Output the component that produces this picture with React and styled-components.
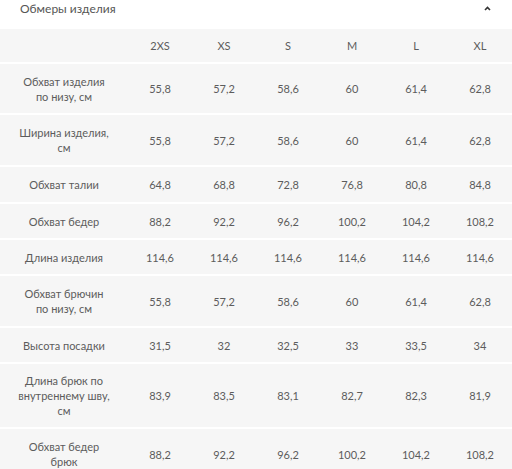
import React from "react";
import styled, { createGlobalStyle } from "styled-components";

const GlobalStyle = createGlobalStyle`
  body {
    margin: 0;
    background: #fff;
    font-family: Lato, "Open Sans", "Liberation Sans", sans-serif;
  }
`;

const Panel = styled.section`
  width: 512px;
  height: 469px;
  overflow: hidden;
  background: #fff;
`;

const Header = styled.div`
  height: 29px;
  display: flex;
  align-items: flex-start;
  justify-content: space-between;
  padding: 0 21px 0 20px;
  box-sizing: border-box;
`;

const Title = styled.span`
  font-size: 12px;
  line-height: 17px;
  color: #555;
`;

const Caret = styled.svg`
  width: 7px;
  height: 5px;
  margin-top: 6px;
`;

const Table = styled.div`
  background: #f6f6f6;
`;

const Row = styled.div`
  display: grid;
  grid-template-columns: 128px repeat(6, 64px);
  align-items: center;
  min-height: ${(p) => p.$h}px;
  border-bottom: 2px solid #fff;
  box-sizing: border-box;
`;

const Cell = styled.div`
  text-align: center;
  font-size: 11px;
  line-height: 15px;
  color: #5c5c5c;
`;

const Label = styled(Cell)`
  padding: 0 18px;
`;

const sizes = ["2XS", "XS", "S", "M", "L", "XL"];

const rows = [
  { label: "Обхват изделия по низу, см", h: 51, v: ["55,8", "57,2", "58,6", "60", "61,4", "62,8"] },
  { label: "Ширина изделия, см", h: 52, v: ["55,8", "57,2", "58,6", "60", "61,4", "62,8"] },
  { label: "Обхват талии", h: 37, v: ["64,8", "68,8", "72,8", "76,8", "80,8", "84,8"] },
  { label: "Обхват бедер", h: 36, v: ["88,2", "92,2", "96,2", "100,2", "104,2", "108,2"] },
  { label: "Длина изделия", h: 36, v: ["114,6", "114,6", "114,6", "114,6", "114,6", "114,6"] },
  { label: "Обхват брючин по низу, см", h: 52, v: ["55,8", "57,2", "58,6", "60", "61,4", "62,8"] },
  { label: "Высота посадки", h: 36, v: ["31,5", "32", "32,5", "33", "33,5", "34"] },
  { label: "Длина брюк по внутреннему шву, см", h: 65, v: ["83,9", "83,5", "83,1", "82,7", "82,3", "81,9"] },
  { label: "Обхват бедер брюк", h: 52, v: ["88,2", "92,2", "96,2", "100,2", "104,2", "108,2"] },
];

export default function App() {
  return (
    <>
      <GlobalStyle />
      <Panel>
        <Header>
          <Title>Обмеры изделия</Title>
          <Caret viewBox="0 0 7 5">
            <path d="M1 4 L3.5 1.5 L6 4" fill="none" stroke="#333" strokeWidth="1.6" />
          </Caret>
        </Header>
        <Table>
          <Row $h={35}>
            <Cell />
            {sizes.map((s) => (
              <Cell key={s}>{s}</Cell>
            ))}
          </Row>
          {rows.map((r) => (
            <Row key={r.label} $h={r.h}>
              <Label>{r.label}</Label>
              {r.v.map((x, i) => (
                <Cell key={i}>{x}</Cell>
              ))}
            </Row>
          ))}
        </Table>
      </Panel>
    </>
  );
}
